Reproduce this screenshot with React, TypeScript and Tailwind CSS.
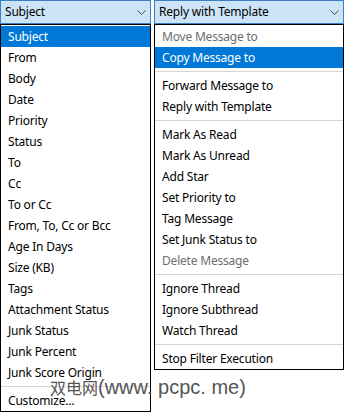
import React from 'react';

type Item = { label: string; kind?: 'selected' | 'disabled' | 'sep' };

const leftItems: Item[] = [
  { label: 'Subject', kind: 'selected' },
  { label: 'From' },
  { label: 'Body' },
  { label: 'Date' },
  { label: 'Priority' },
  { label: 'Status' },
  { label: 'To' },
  { label: 'Cc' },
  { label: 'To or Cc' },
  { label: 'From, To, Cc or Bcc' },
  { label: 'Age In Days' },
  { label: 'Size (KB)' },
  { label: 'Tags' },
  { label: 'Attachment Status' },
  { label: 'Junk Status' },
  { label: 'Junk Percent' },
  { label: 'Junk Score Origin' },
  { label: '', kind: 'sep' },
  { label: 'Customize...' },
];

const rightItems: Item[] = [
  { label: 'Move Message to', kind: 'disabled' },
  { label: 'Copy Message to', kind: 'selected' },
  { label: '', kind: 'sep' },
  { label: 'Forward Message to' },
  { label: 'Reply with Template' },
  { label: '', kind: 'sep' },
  { label: 'Mark As Read' },
  { label: 'Mark As Unread' },
  { label: 'Add Star' },
  { label: 'Set Priority to' },
  { label: 'Tag Message' },
  { label: 'Set Junk Status to' },
  { label: 'Delete Message', kind: 'disabled' },
  { label: '', kind: 'sep' },
  { label: 'Ignore Thread' },
  { label: 'Ignore Subthread' },
  { label: 'Watch Thread' },
  { label: '', kind: 'sep' },
  { label: 'Stop Filter Execution' },
];

function Chevron() {
  return (
    <svg width="9" height="5" viewBox="0 0 9 5" className="shrink-0">
      <polyline points="0.5,0.5 4.5,4.5 8.5,0.5" fill="none" stroke="#4a4a4a" strokeWidth="1" />
    </svg>
  );
}

function Dropdown({ value, items, width }: { value: string; items: Item[]; width: string }) {
  return (
    <div className={`flex flex-col ${width}`}>
      <div className="flex h-[24px] items-center justify-between border border-[#3d7fbf] bg-[#cce4f7] pl-[4px] pr-[4px]">
        <span>{value}</span>
        <Chevron />
      </div>
      <div className="flex flex-col border border-black bg-white pt-[1px]">
        {items.map((item, i) =>
          item.kind === 'sep' ? (
            <div key={i} className="flex h-[7px] items-center">
              <div className="h-px w-full bg-[#d7d7d7]" />
            </div>
          ) : (
            <div
              key={i}
              className={
                'flex h-[21px] items-center whitespace-nowrap pl-[7px] ' +
                (item.kind === 'selected'
                  ? 'bg-[#0078d7] text-white'
                  : item.kind === 'disabled'
                  ? 'text-[#6d6d6d]'
                  : 'text-black')
              }
            >
              {item.label}
            </div>
          )
        )}
      </div>
    </div>
  );
}

export default function App() {
  return (
    <div className="relative h-[412px] w-[344px] overflow-hidden bg-white text-[12px] leading-none tracking-[-0.2px] text-black [font-family:'Noto_Sans',sans-serif]">
      <div className="flex items-start gap-[3px]">
        <Dropdown value="Subject" items={leftItems} width="w-[151px]" />
        <Dropdown value="Reply with Template" items={rightItems} width="w-[190px]" />
      </div>
      {/* watermark over the screenshot */}
      <div className="pointer-events-none absolute left-[50px] top-[377px] flex items-baseline whitespace-nowrap text-[#555555] tracking-normal">
        <span className="text-[16px] leading-none [font-family:'Noto_Sans_CJK_SC',sans-serif]">双电网</span>
        <span className="text-[20px] leading-none [font-family:'Liberation_Sans',sans-serif]">(www. pcpc. me)</span>
      </div>
    </div>
  );
}
